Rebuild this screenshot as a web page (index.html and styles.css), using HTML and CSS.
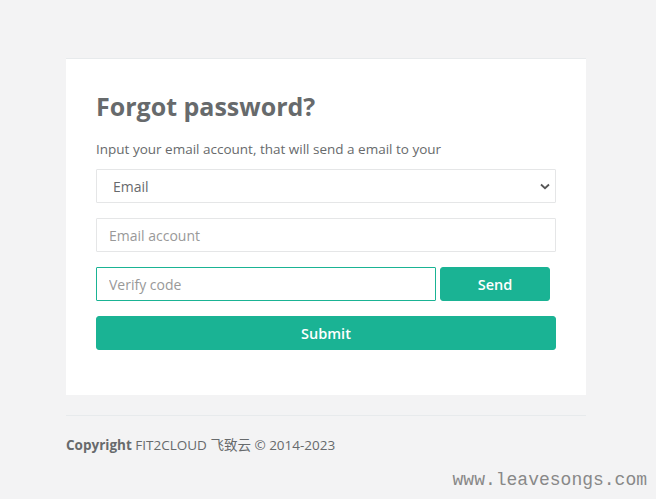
FILE: index.html
```html
<!DOCTYPE html>
<html>
<head>
<meta charset="utf-8">
<link rel="stylesheet" href="styles.css">
</head>
<body>
<div class="page">
  <div class="card">
    <h2 class="title">Forgot password?</h2>
    <p class="lead">Input your email account, that will send a email to your</p>
    <form class="form">
      <div class="field">
        <select class="control select">
          <option>Email</option>
        </select>
        <svg class="chev" width="10" height="7" viewBox="0 0 10 7"><path d="M1 1.5 L5 5.2 L9 1.5" fill="none" stroke="#555" stroke-width="1.8"/></svg>
      </div>
      <div class="field">
        <input class="control" type="text" placeholder="Email account">
      </div>
      <div class="field row">
        <input class="control code" type="text" placeholder="Verify code">
        <button type="button" class="btn send">Send</button>
      </div>
      <button type="button" class="btn submit">Submit</button>
    </form>
  </div>
  <hr class="rule">
  <div class="copy"><strong>Copyright</strong> FIT2CLOUD 飞致云 © 2014-2023</div>
</div>
<div class="watermark">www.leavesongs.com</div>
</body>
</html>
```
FILE: styles.css
```css
html, body {
  margin: 0;
  padding: 0;
  background: #f3f3f4;
  height: 100%;
}
body {
  font-family: "Open Sans", "Noto Sans CJK SC", sans-serif;
  color: #676a6c;
  font-size: 13px;
}
.page {
  width: 520px;
  margin: 0 0 0 66px;
  padding-top: 58px;
}
.card {
  background: #fff;
  border-top: 1px solid #e7eaec;
  padding: 31px 30px 45px 30px;
}
.title {
  margin: 0;
  font-size: 25px;
  line-height: 32px;
  font-weight: 700;
  color: #676a6c;
}
.lead {
  margin: 18px 0 10px 0;
  font-size: 13.5px;
  line-height: 19px;
}
.form {
  display: flex;
  flex-direction: column;
}
.field {
  position: relative;
  margin-bottom: 15px;
}
.row {
  display: flex;
  gap: 4px;
}
.control {
  box-sizing: border-box;
  display: block;
  width: 100%;
  height: 34px;
  border: 1px solid #e5e6e7;
  border-radius: 1px;
  background: #fff;
  padding: 6px 12px;
  font-family: "Open Sans", sans-serif;
  font-size: 14px;
  color: #676a6c;
  outline: none;
}
.control::placeholder {
  color: #999;
}
.select {
  appearance: none;
  -webkit-appearance: none;
  padding-left: 16px;
}
.chev {
  position: absolute;
  right: 6px;
  top: 14px;
  pointer-events: none;
}
.code {
  width: 340px;
  flex: none;
  border-color: #1ab394;
}
.btn {
  box-sizing: border-box;
  height: 34px;
  border: 1px solid #1ab394;
  background: #1ab394;
  color: #fff;
  border-radius: 3px;
  font-family: "Open Sans", sans-serif;
  font-size: 14.5px;
  font-weight: 600;
  padding: 0;
}
.send {
  width: 110px;
}
.submit {
  width: 100%;
}
.rule {
  border: 0;
  border-top: 1px solid #e7eaec;
  margin: 20px 0 0 0;
}
.copy {
  margin-top: 20px;
  font-size: 13.5px;
  line-height: 18px;
}
.copy strong {
  font-weight: 700;
}
.watermark {
  position: absolute;
  right: 9px;
  bottom: 9px;
  font-family: "Liberation Mono", monospace;
  font-size: 18px;
  color: #888;
}
```
